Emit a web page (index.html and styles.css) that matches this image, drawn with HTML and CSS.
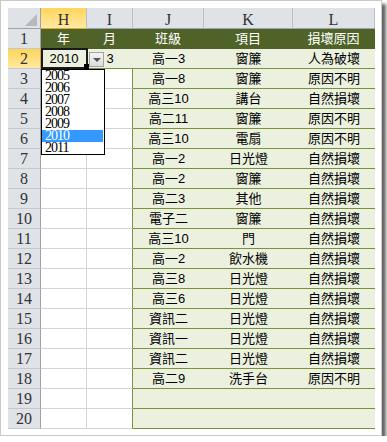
FILE: index.html
```html
<!DOCTYPE html>
<html lang="zh-TW">
<head>
    <meta charset="UTF-8">
    <title>損壞統計</title>
    <link rel="stylesheet" href="styles.css">
</head>
<body>
    <div class="frame">
        <div class="sheet">
            <div class="hd corner"></div>
            <div class="hd col on">H</div>
            <div class="hd col">I</div>
            <div class="hd col">J</div>
            <div class="hd col">K</div>
            <div class="hd col">L</div>

            <div class="hd row">1</div>
            <div class="c t">年</div><div class="c t">月</div><div class="c t">班級</div><div class="c t">項目</div><div class="c t">損壞原因</div>

            <div class="hd row on">2</div>
            <div class="c d">2010</div><div class="c d">3</div><div class="c d">高一3</div><div class="c d">窗簾</div><div class="c d">人為破壞</div>

            <div class="hd row">3</div>
            <div class="c"></div><div class="c edge"></div><div class="c d">高一8</div><div class="c d">窗簾</div><div class="c d">原因不明</div>

            <div class="hd row">4</div>
            <div class="c"></div><div class="c edge"></div><div class="c d">高三10</div><div class="c d">講台</div><div class="c d">自然損壞</div>

            <div class="hd row">5</div>
            <div class="c"></div><div class="c edge"></div><div class="c d">高二11</div><div class="c d">窗簾</div><div class="c d">原因不明</div>

            <div class="hd row">6</div>
            <div class="c"></div><div class="c edge"></div><div class="c d">高三10</div><div class="c d">電扇</div><div class="c d">原因不明</div>

            <div class="hd row">7</div>
            <div class="c"></div><div class="c edge"></div><div class="c d">高一2</div><div class="c d">日光燈</div><div class="c d">自然損壞</div>

            <div class="hd row">8</div>
            <div class="c"></div><div class="c edge"></div><div class="c d">高一2</div><div class="c d">窗簾</div><div class="c d">自然損壞</div>

            <div class="hd row">9</div>
            <div class="c"></div><div class="c edge"></div><div class="c d">高二3</div><div class="c d">其他</div><div class="c d">自然損壞</div>

            <div class="hd row">10</div>
            <div class="c"></div><div class="c edge"></div><div class="c d">電子二</div><div class="c d">窗簾</div><div class="c d">自然損壞</div>

            <div class="hd row">11</div>
            <div class="c"></div><div class="c edge"></div><div class="c d">高三10</div><div class="c d">門</div><div class="c d">自然損壞</div>

            <div class="hd row">12</div>
            <div class="c"></div><div class="c edge"></div><div class="c d">高一2</div><div class="c d">飲水機</div><div class="c d">自然損壞</div>

            <div class="hd row">13</div>
            <div class="c"></div><div class="c edge"></div><div class="c d">高三8</div><div class="c d">日光燈</div><div class="c d">自然損壞</div>

            <div class="hd row">14</div>
            <div class="c"></div><div class="c edge"></div><div class="c d">高三6</div><div class="c d">日光燈</div><div class="c d">自然損壞</div>

            <div class="hd row">15</div>
            <div class="c"></div><div class="c edge"></div><div class="c d">資訊二</div><div class="c d">日光燈</div><div class="c d">自然損壞</div>

            <div class="hd row">16</div>
            <div class="c"></div><div class="c edge"></div><div class="c d">資訊一</div><div class="c d">日光燈</div><div class="c d">自然損壞</div>

            <div class="hd row">17</div>
            <div class="c"></div><div class="c edge"></div><div class="c d">資訊二</div><div class="c d">日光燈</div><div class="c d">自然損壞</div>

            <div class="hd row">18</div>
            <div class="c"></div><div class="c edge"></div><div class="c d">高二9</div><div class="c d">洗手台</div><div class="c d">原因不明</div>

            <div class="hd row">19</div>
            <div class="c"></div><div class="c edge"></div><div class="c d"></div><div class="c d"></div><div class="c d"></div>

            <div class="hd row">20</div>
            <div class="c"></div><div class="c edge"></div><div class="c d"></div><div class="c d"></div><div class="c d"></div>

            <!-- active cell + validation dropdown -->
            <div class="sel"></div>
            <div class="handle"></div>
            <div class="dd-btn"><span class="arrow"></span></div>
            <ul class="dd-list">
                <li>2005</li>
                <li>2006</li>
                <li>2007</li>
                <li>2008</li>
                <li>2009</li>
                <li class="hit">2010</li>
                <li>2011</li>
            </ul>
        </div>
    </div>
</body>
</html>
```

FILE: styles.css
```css
body {
    margin: 0;
    background: #fff;
}
.frame {
    width: 382px;
    height: 436px;
    box-sizing: border-box;
    border: 1px solid #c9c9c9;
    padding: 7px;
    background: #fff;
    box-shadow: 4px 4px 3px rgba(0,0,0,0.6);
}
.sheet {
    position: relative;
    display: grid;
    grid-template-columns: 33px 46px 46px 71px 89px 82px;
    grid-template-rows: 21px repeat(20, 20px);
}
.sheet > div {
    box-sizing: border-box;
}

/* headers */
.hd {
    background: #dfe2e7;
    color: #333;
    font-family: "Liberation Serif", serif;
    font-size: 16px;
    text-align: center;
}
.corner {
    position: relative;
    border-right: 1px solid #9ea3a9;
    border-bottom: 1px solid #9ea3a9;
}
.corner::after {
    content: "";
    position: absolute;
    right: 3px;
    bottom: 2px;
    width: 0;
    height: 0;
    border-left: 12px solid transparent;
    border-bottom: 12px solid #b6babf;
}
.col {
    border-right: 1px solid #bcc0c5;
    border-bottom: 1px solid #9ea3a9;
    line-height: 19px;
    padding-top: 2px;
}
.row {
    border-right: 1px solid #9ea3a9;
    border-bottom: 1px solid #c5c8cc;
    line-height: 19px;
}
.hd.on {
    background: linear-gradient(#ffd55a, #ffe9a3);
}
.col.on { border-bottom-color: #e3a737; }
.row.on { border-right-color: #e3a737; }

/* cells */
.c {
    background: #fff;
    border-right: 1px solid #d4d4d4;
    border-bottom: 1px solid #d4d4d4;
    font-family: "Liberation Sans", "Noto Sans CJK TC", sans-serif;
    font-size: 13px;
    line-height: 19px;
    text-align: center;
    color: #000;
    white-space: nowrap;
}
.c.edge { border-right-color: #77933c; }
.c.t {
    background: #4f6228;
    border-color: #4f6228;
    color: #fff;
}
.c.d {
    background: #ebf1de;
    border-right: none;
    border-bottom-color: #77933c;
}

.sel {
    position: absolute;
    left: 33px;
    top: 40px;
    width: 47px;
    height: 21px;
    border: 2px solid #1a1a1a;
}
.handle {
    position: absolute;
    left: 76px;
    top: 56px;
    width: 5px;
    height: 5px;
    background: #000;
}
.dd-btn {
    position: absolute;
    left: 81px;
    top: 44px;
    width: 15px;
    height: 15px;
    border: 1px solid #a3a3a3;
    background: linear-gradient(#f3f3f3, #dcdcdc);
    display: flex;
    align-items: center;
    justify-content: center;
}
.arrow {
    width: 0;
    height: 0;
    border-left: 4px solid transparent;
    border-right: 4px solid transparent;
    border-top: 4px solid #555;
}
.dd-list {
    position: absolute;
    left: 33px;
    top: 61px;
    width: 64px;
    margin: 0;
    padding: 0;
    list-style: none;
    box-sizing: border-box;
    border: 1px solid #000;
    background: #fff;
    font-family: "Liberation Serif", serif;
    font-size: 14px;
    letter-spacing: -1px;
}
.dd-list li {
    height: 12px;
    line-height: 12px;
    padding-left: 3px;
    margin-right: 1px;
}
.dd-list li.hit {
    background: #3399ff;
    color: #fff;
}
```
